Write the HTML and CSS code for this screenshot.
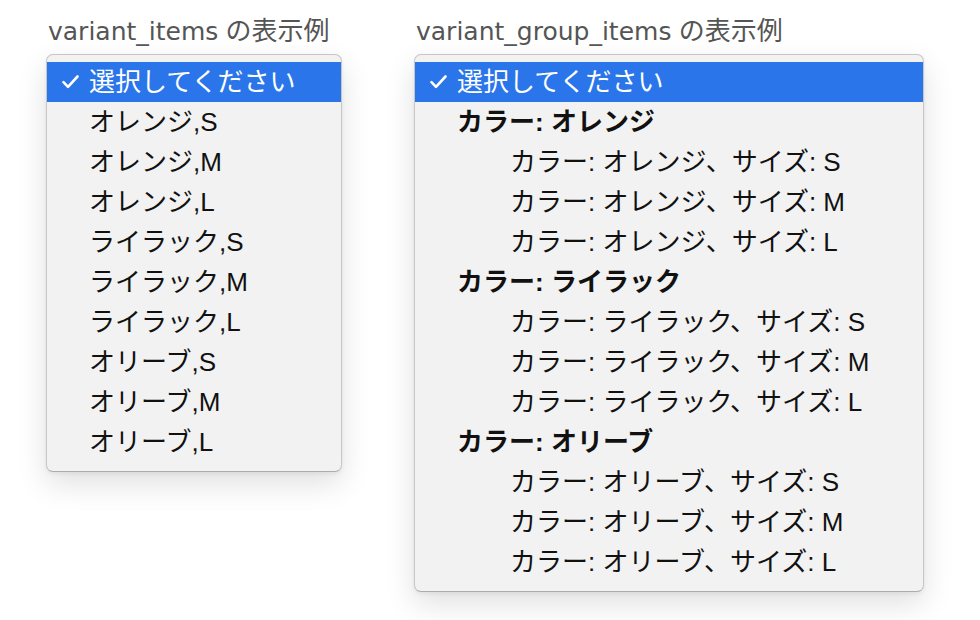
FILE: index.html
```html
<!DOCTYPE html>
<html lang="ja">
<head>
    <meta charset="UTF-8">
    <meta name="viewport" content="width=device-width, initial-scale=1.0">
    <title>variant_items / variant_group_items</title>
    <link rel="stylesheet" href="styles.css">
</head>
<body>
<div class="page">

    <!-- variant_items -->
    <div class="demo demo-items">
        <h2 class="demo-title"><span class="code">variant_items</span> の表示例</h2>
        <div class="menu">
            <div class="opt selected">
                <span class="mark"><svg width="17" height="14" viewBox="0 0 17 14"><path d="M1.5 7.2 L6 11.8 L15.5 1.5" fill="none" stroke="#fff" stroke-width="2.6" stroke-linecap="round" stroke-linejoin="round"/></svg></span>
                選択してください
            </div>
            <div class="opt"><span class="mark"></span>オレンジ,S</div>
            <div class="opt"><span class="mark"></span>オレンジ,M</div>
            <div class="opt"><span class="mark"></span>オレンジ,L</div>
            <div class="opt"><span class="mark"></span>ライラック,S</div>
            <div class="opt"><span class="mark"></span>ライラック,M</div>
            <div class="opt"><span class="mark"></span>ライラック,L</div>
            <div class="opt"><span class="mark"></span>オリーブ,S</div>
            <div class="opt"><span class="mark"></span>オリーブ,M</div>
            <div class="opt"><span class="mark"></span>オリーブ,L</div>
        </div>
    </div>

    <!-- variant_group_items -->
    <div class="demo demo-groups">
        <h2 class="demo-title"><span class="code">variant_group_items</span> の表示例</h2>
        <div class="menu">
            <div class="opt selected">
                <span class="mark"><svg width="17" height="14" viewBox="0 0 17 14"><path d="M1.5 7.2 L6 11.8 L15.5 1.5" fill="none" stroke="#fff" stroke-width="2.6" stroke-linecap="round" stroke-linejoin="round"/></svg></span>
                選択してください
            </div>
            <div class="opt group"><span class="mark"></span>カラー: オレンジ</div>
            <div class="opt sub"><span class="mark"></span>カラー: オレンジ、サイズ: S</div>
            <div class="opt sub"><span class="mark"></span>カラー: オレンジ、サイズ: M</div>
            <div class="opt sub"><span class="mark"></span>カラー: オレンジ、サイズ: L</div>
            <div class="opt group"><span class="mark"></span>カラー: ライラック</div>
            <div class="opt sub"><span class="mark"></span>カラー: ライラック、サイズ: S</div>
            <div class="opt sub"><span class="mark"></span>カラー: ライラック、サイズ: M</div>
            <div class="opt sub"><span class="mark"></span>カラー: ライラック、サイズ: L</div>
            <div class="opt group"><span class="mark"></span>カラー: オリーブ</div>
            <div class="opt sub"><span class="mark"></span>カラー: オリーブ、サイズ: S</div>
            <div class="opt sub"><span class="mark"></span>カラー: オリーブ、サイズ: M</div>
            <div class="opt sub"><span class="mark"></span>カラー: オリーブ、サイズ: L</div>
        </div>
    </div>

</div>
</body>
</html>
```

FILE: styles.css
```css
html, body {
    margin: 0;
    background-color: #ffffff;
}

body {
    min-height: 620px;
    font-family: "Liberation Sans", "Noto Sans CJK JP", sans-serif;
    color: #111111;
}

.page {
    display: flex;
    align-items: flex-start;
    gap: 72px;
    padding: 14px 0 29px 46px;
}

.demo-items {
    width: 296px;
}

.demo-groups {
    width: 510px;
}

.demo-title {
    margin: 0 0 5px 2px;
    font-size: 26px;
    font-weight: normal;
    line-height: 34px;
    color: #555555;
    white-space: nowrap;
}

.demo-title .code {
    font-family: "DejaVu Sans", "Liberation Sans", sans-serif;
    font-size: 25px;
}

.menu {
    border: 1px solid #c6c6c6;
    border-bottom-color: #acacac;
    border-radius: 7px;
    background-color: #f2f2f2;
    padding: 7px 0 9px;
    box-shadow: 0 12px 30px rgba(0, 0, 0, 0.12), 0 2px 4px rgba(0, 0, 0, 0.06);
}

.opt {
    display: flex;
    align-items: center;
    height: 40px;
    font-size: 26px;
    line-height: 40px;
    white-space: nowrap;
}

.opt .mark {
    flex: none;
    display: flex;
    align-items: center;
    width: 27px;
    height: 40px;
    padding-left: 15px;
}

.opt.selected {
    background-color: #2a75ea;
    color: #ffffff;
}

.opt.group {
    font-weight: bold;
}

.opt.sub {
    padding-left: 53px;
}
```
